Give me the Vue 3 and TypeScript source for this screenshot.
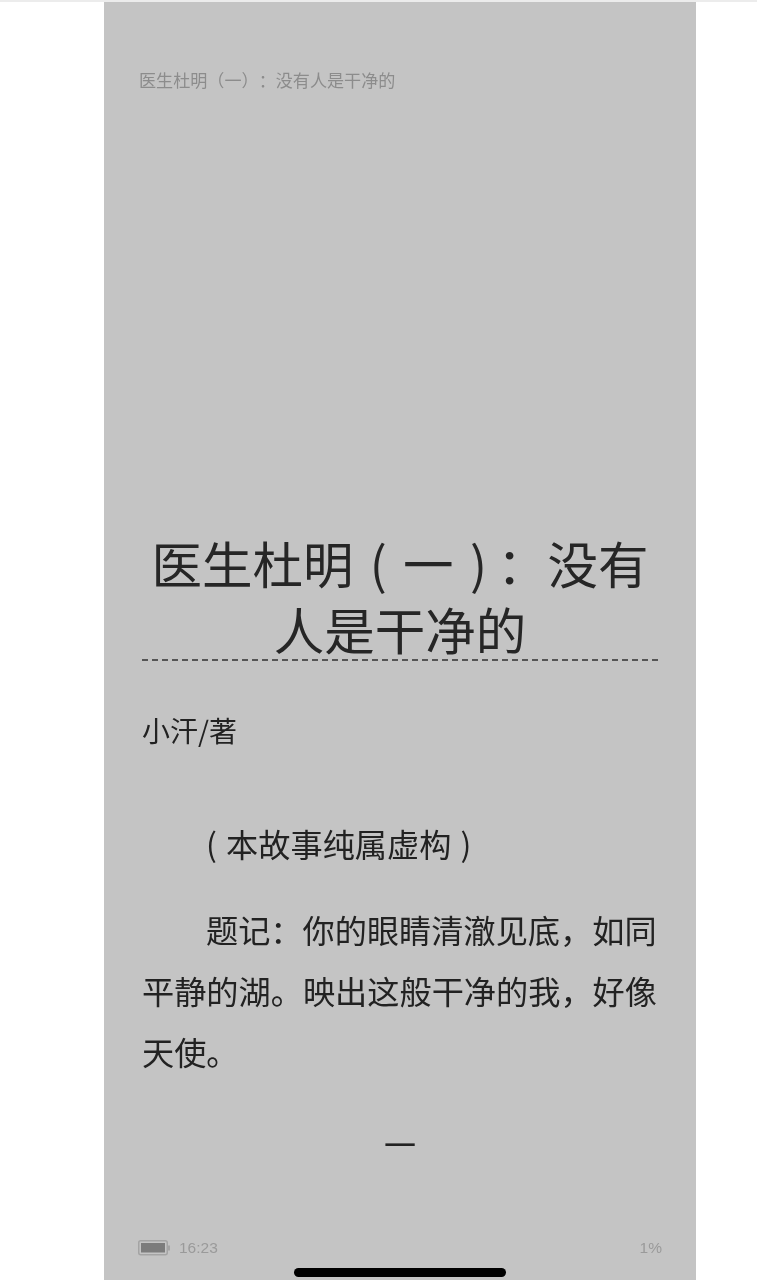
<script setup lang="ts">
const header = '医生杜明（一）：没有人是干净的'
const title = '医生杜明 ( 一 )\u2009：没有人是干净的'
const paragraphs = ['( 本故事纯属虚构 )', '题记：你的眼睛清澈见底，如同平静的湖。映出这般干净的我，好像天使。']
</script>

<template>
  <main class="page">
    <section class="screen">
      <header class="running-head">{{ header }}</header>
      <h1 class="title">{{ title }}</h1>
      <p class="author">小汗/著</p>
      <p v-for="text in paragraphs" :key="text" class="para">{{ text }}</p>
      <p class="numeral">一</p>
      <footer class="status">
        <div class="status-left">
          <svg class="battery" width="33" height="16" viewBox="0 0 33 16" aria-hidden="true">
            <rect x="0.75" y="0.75" width="28.5" height="14" rx="2" fill="none" stroke="#a4a4a4" stroke-width="1.5" />
            <rect x="3" y="3" width="24" height="9.5" fill="#7c7c7c" />
            <rect x="30" y="5.5" width="2" height="5" fill="#a4a4a4" />
          </svg>
          <span>16:23</span>
        </div>
        <span>1%</span>
      </footer>
      <div class="home-bar"></div>
    </section>
  </main>
</template>

<style>
html, body { margin: 0; background: #fff; }
</style>

<style scoped>
.page {
  height: 1280px;
  overflow: hidden;
  padding: 0 61px 0 104px;
  border-top: 2px solid #ececec;
  box-sizing: border-box;
  background: #fff;
}
.screen {
  height: 1278px;
  box-sizing: border-box;
  padding: 0 38px;
  background: #c4c4c4;
  display: flex;
  flex-direction: column;
  font-family: "Noto Sans CJK SC", "Liberation Sans", sans-serif;
  text-spacing-trim: space-all;
  color: #222;
}
.running-head {
  margin-top: 66px;
  height: 24px;
  line-height: 24px;
  font-size: 17.1px;
  color: #8c8c8c;
  margin-left: -3px;
  filter: blur(0.6px);
}
.title {
  margin: 437px 0 0;
  height: 132px;
  box-sizing: border-box;
  font-size: 50.5px;
  line-height: 66px;
  font-weight: 400;
  word-spacing: 5px;
  text-align: center;
  color: #262626;
  border-bottom: 2px dashed #555;
  filter: blur(0.4px);
}
.author {
  margin: 49px 0 0;
  font-size: 28px;
  line-height: 40px;
  filter: blur(0.4px);
}
.para {
  margin: 63px 0 0;
  font-size: 32.2px;
  line-height: 61px;
  word-spacing: 2px;
  text-indent: 64px;
  filter: blur(0.4px);
}
.para + .para {
  margin-top: 25px;
}
.numeral {
  margin: 31px 0 0;
  height: 61px;
  font-size: 32px;
  line-height: 61px;
  text-align: center;
  filter: blur(0.4px);
}
.status {
  margin-top: auto;
  margin-bottom: 22px;
  display: flex;
  justify-content: space-between;
  align-items: center;
  margin-left: -4px;
  margin-right: -4px;
  font-family: "Liberation Sans", sans-serif;
  font-size: 15.5px;
  line-height: 20px;
  color: #9a9a9a;
  filter: blur(0.6px);
}
.status-left {
  display: flex;
  align-items: center;
  gap: 8px;
}
.home-bar {
  position: absolute;
  left: 294px;
  top: 1268px;
  width: 212px;
  height: 9px;
  border-radius: 5px;
  background: #000;
}
</style>
